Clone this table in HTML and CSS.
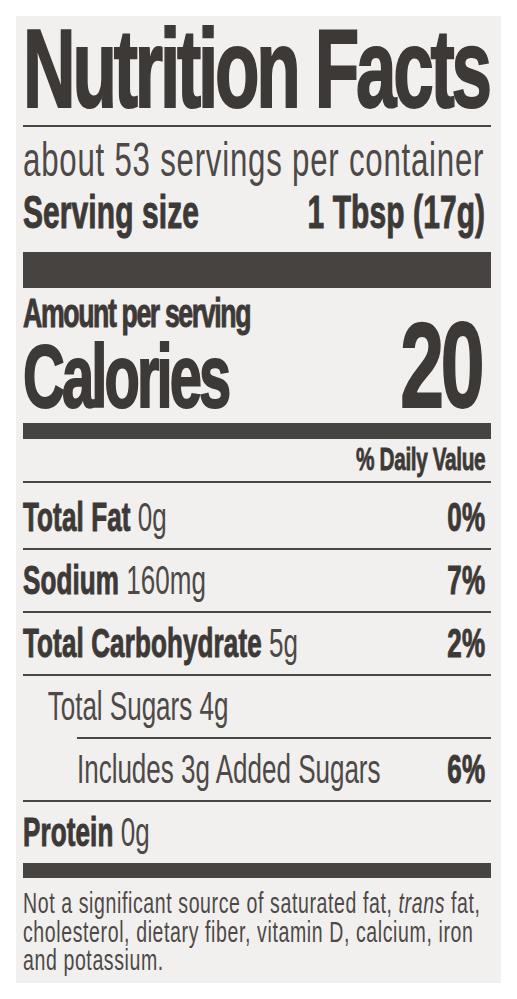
FILE: index.html
```html
<!DOCTYPE html>
<html lang="en">
<head>
    <meta charset="UTF-8">
    <meta name="viewport" content="width=device-width, initial-scale=1.0">
    <title>Nutrition Facts</title>
    <link rel="stylesheet" href="styles.css">
</head>
<body>
    <div class="label">
        <div class="panel">
            <h1 class="title">Nutrition Facts</h1>
            <div class="rule"></div>
            <p class="servings">about 53 servings per container</p>
            <div class="serving-size">
                <span class="ss-name">Serving size</span>
                <span class="ss-value">1 Tbsp (17g)</span>
            </div>
            <div class="bar bar-thick"></div>

            <div class="calories">
                <div>
                    <div class="amount">Amount per serving</div>
                    <div class="cal-label">Calories</div>
                </div>
                <div class="cal-value">20</div>
            </div>
            <div class="bar bar-medium"></div>

            <div class="dv-head">% Daily Value</div>
            <div class="rule"></div>

            <div class="nutrient first">
                <span><b>Total Fat</b> 0g</span>
                <b>0%</b>
            </div>
            <div class="nutrient">
                <span><b>Sodium</b> 160mg</span>
                <b>7%</b>
            </div>
            <div class="nutrient">
                <span><b>Total Carbohydrate</b> 5g</span>
                <b>2%</b>
            </div>
            <div class="nutrient sub">
                <span>Total Sugars 4g</span>
            </div>
            <div class="nutrient sub-2">
                <span>Includes 3g Added Sugars</span>
                <b>6%</b>
            </div>
            <div class="nutrient">
                <span><b>Protein</b> 0g</span>
            </div>
            <div class="bar bar-bottom"></div>

            <p class="footnote">Not a significant source of saturated fat, <i>trans</i> fat, cholesterol, dietary fiber, vitamin D, calcium, iron and potassium.</p>
        </div>
    </div>
</body>
</html>
```

FILE: styles.css
```css
body {
    margin: 16px;
    background-color: #ffffff;
    font-family: "Liberation Sans", Arial, sans-serif;
    color: #433f3d;
}

/* the printed label uses a very condensed face, so the panel is squeezed sideways */
.label {
    width: 468px;
    height: 967px;
    padding: 0 10px 0 7px;
    background-color: #f1f0ee;
    border-right: 1px solid #8c8987;
}

.panel {
    width: 720px;
    transform: scaleX(0.65);
    transform-origin: left top;
}

.title {
    margin: 0;
    font-size: 112px;
    line-height: 106px;
    font-weight: bold;
    letter-spacing: -4.9px;
    color: #3d3937;
    -webkit-text-stroke: 2px #3d3937;
    white-space: nowrap;
}

.rule {
    height: 2px;
    margin-top: 3px;
    background-color: #4a4644;
}

.servings {
    margin: 7px 0 0;
    font-size: 48px;
    line-height: 52px;
    letter-spacing: 1.2px;
    color: #4d4947;
    white-space: nowrap;
}

.serving-size {
    display: flex;
    justify-content: space-between;
    margin-top: 1px;
    padding-right: 9px;
    font-size: 46px;
    line-height: 50px;
    font-weight: bold;
    letter-spacing: 0.2px;
    color: #3d3937;
    -webkit-text-stroke: 1px #3d3937;
    white-space: nowrap;
}

.bar {
    background-color: #474341;
}

.bar-thick {
    height: 36px;
    margin-top: 15px;
}

.bar-medium {
    height: 16px;
    margin-top: 7px;
}

.bar-bottom {
    height: 15px;
}

.calories {
    display: flex;
    justify-content: space-between;
    align-items: flex-end;
    margin-top: 2px;
    padding-right: 15px;
    font-weight: bold;
    color: #3d3937;
    -webkit-text-stroke: 1px #3d3937;
    white-space: nowrap;
}

.amount {
    font-size: 41px;
    line-height: 46px;
    letter-spacing: -2.1px;
}

.cal-label {
    font-size: 89px;
    line-height: 80px;
    letter-spacing: -4.4px;
    -webkit-text-stroke: 2px #3d3937;
}

.cal-value {
    font-size: 121px;
    line-height: 102px;
    letter-spacing: -5px;
    -webkit-text-stroke: 2px #3d3937;
}

.dv-head {
    margin-top: 1px;
    padding-right: 9px;
    text-align: right;
    font-size: 32px;
    line-height: 38px;
    font-weight: bold;
    letter-spacing: -0.6px;
    color: #3d3937;
    -webkit-text-stroke: 0.8px #3d3937;
}

.nutrient {
    display: flex;
    justify-content: space-between;
    padding-right: 9px;
    border-top: 2px solid #4a4644;
    font-size: 40px;
    line-height: 61px;
    color: #4d4947;
    white-space: nowrap;
}

.nutrient b {
    color: #3d3937;
    letter-spacing: 0.2px;
    -webkit-text-stroke: 1px #3d3937;
}

.nutrient.first {
    border-top: none;
    padding-top: 4px;
}

.nutrient.sub {
    padding-left: 38px;
}

.nutrient.sub-2 {
    margin-left: 83px;
}

.footnote {
    margin: 11px 0 0;
    font-size: 30px;
    line-height: 28.5px;
    letter-spacing: 0.95px;
    color: #4d4947;
}
```
